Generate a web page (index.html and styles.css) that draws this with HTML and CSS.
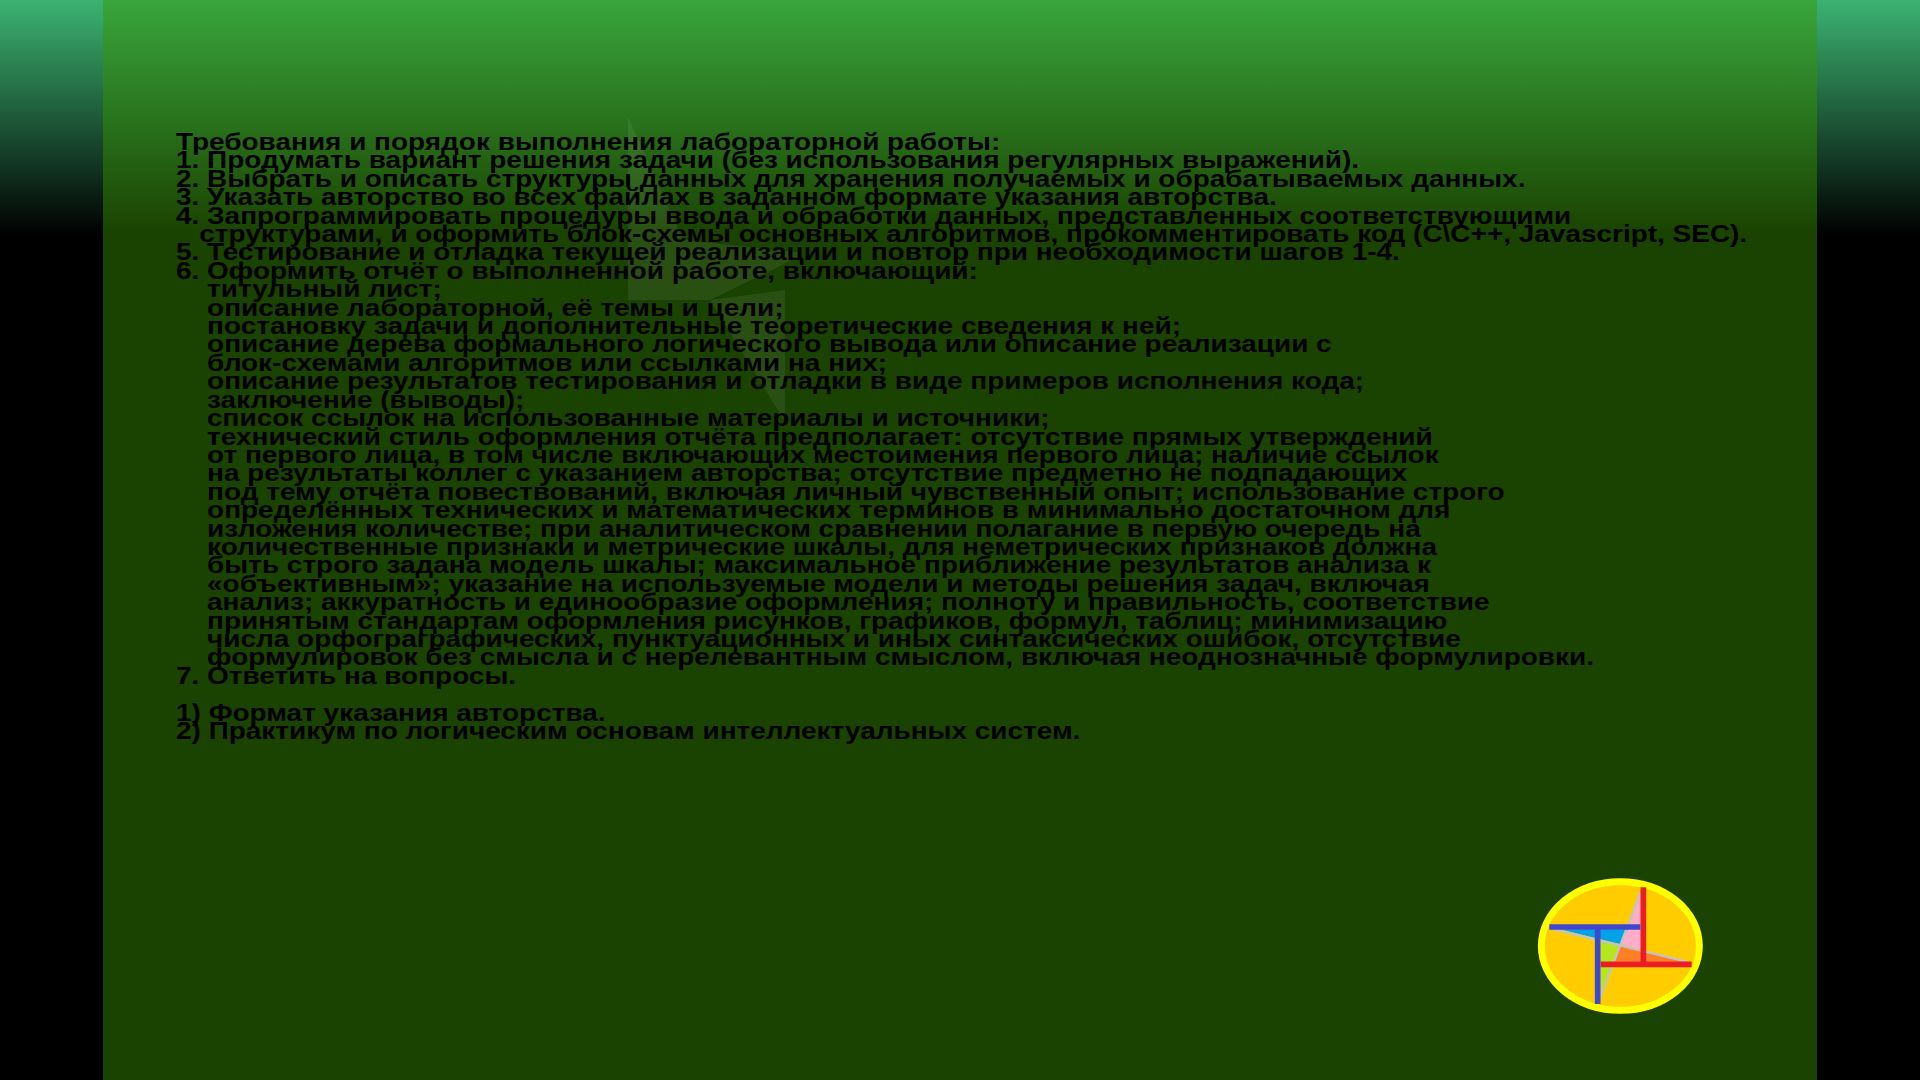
FILE: index.html
```html
<!DOCTYPE html>
<html lang="ru">
<head>
<meta charset="utf-8">
<title>Лабораторная работа</title>
<link rel="stylesheet" href="styles.css">
</head>
<body>
<main class="stage">
<svg class="star" viewBox="0 0 200 340" aria-hidden="true">
<path class="wedge" d="M28 17L110 200H28Z"/>
<path class="wedge" d="M110 200L83 140L207 153Z"/>
<path class="wedge" d="M110 200L185 190V322Z"/>
</svg>
<pre class="text">Требования и порядок выполнения лабораторной работы:
1. Продумать вариант решения задачи (без использования регулярных выражений).
2. Выбрать и описать структуры данных для хранения получаемых и обрабатываемых данных.
3. Указать авторство во всех файлах в заданном формате указания авторства.
4. Запрограммировать процедуры ввода и обработки данных, представленных соответствующими
   структурами, и оформить блок-схемы основных алгоритмов, прокомментировать код (C\C++, Javascript, SEC).
5. Тестирование и отладка текущей реализации и повтор при необходимости шагов 1-4.
6. Оформить отчёт о выполненной работе, включающий:
    титульный лист;
    описание лабораторной, её темы и цели;
    постановку задачи и дополнительные теоретические сведения к ней;
    описание дерева формального логического вывода или описание реализации с
    блок-схемами алгоритмов или ссылками на них;
    описание результатов тестирования и отладки в виде примеров исполнения кода;
    заключение (выводы);
    список ссылок на использованные материалы и источники;
    технический стиль оформления отчёта предполагает: отсутствие прямых утверждений
    от первого лица, в том числе включающих местоимения первого лица; наличие ссылок
    на результаты коллег с указанием авторства; отсутствие предметно не подпадающих
    под тему отчёта повествований, включая личный чувственный опыт; использование строго
    определённых технических и математических терминов в минимально достаточном для
    изложения количестве; при аналитическом сравнении полагание в первую очередь на
    количественные признаки и метрические шкалы, для неметрических признаков должна
    быть строго задана модель шкалы; максимальное приближение результатов анализа к
    «объективным»; указание на используемые модели и методы решения задач, включая
    анализ; аккуратность и единообразие оформления; полноту и правильность, соответствие
    принятым стандартам оформления рисунков, графиков, формул, таблиц; минимизацию
    числа орфограграфических, пунктуационных и иных синтаксических ошибок, отсутствие
    формулировок без смысла и с нерелевантным смыслом, включая неоднозначные формулировки.
7. Ответить на вопросы.

1) Формат указания авторства.
2) Практикум по логическим основам интеллектуальных систем.</pre>
<svg class="logo" viewBox="0 0 600 480" aria-hidden="true">
<ellipse cx="301" cy="258" rx="237" ry="193" fill="#ffcc00" stroke="#ffff00" stroke-width="21"/>
<path d="M120 208H325L300 252Z" fill="#00a2e8"/>
<path d="M362 100V268L300 252L325 208Z" fill="#ffaec9"/>
<path d="M300 258L490 305H280Z" fill="#ff7f27"/>
<path d="M242 242L300 256L242 400Z" fill="#b5e61d"/>
<path d="M100 208L300 256L500 305M362 95L242 410" stroke="#c3c3c3" stroke-width="7" fill="none"/>
<path d="M370 82V312M242 313H515" stroke="#ed1c24" stroke-width="17" fill="none"/>
<path d="M88 201H361M233 201V432" stroke="#3f48cc" stroke-width="17" fill="none"/>
</svg>
</main>
</body>
</html>
```
FILE: styles.css
```css
html, body {
  margin: 0;
  height: 100%;
  overflow: hidden;
}
body {
  background: linear-gradient(#3cb371 0, #000 235px);
}
.stage {
  position: relative;
  box-sizing: border-box;
  width: 1714px;
  height: 1080px;
  margin: 0 auto;
  padding-top: 133px;
  padding-left: 73px;
  background: linear-gradient(#39a63c 0, #1a4200 235px);
}
.text {
  position: relative;
  width: fit-content;
  margin: 0;
  font: bold 24px/18.4px "Liberation Sans", Arial, sans-serif;
  color: #000;
  white-space: pre;
  transform: scaleX(1.165);
  transform-origin: left top;
}
.star {
  position: absolute;
  left: 497px;
  top: 100px;
  width: 200px;
  height: 340px;
}
.wedge {
  fill: rgba(255, 255, 255, 0.07);
}
.logo {
  position: absolute;
  left: 1417px;
  top: 860px;
  width: 200px;
  height: 160px;
}
```
